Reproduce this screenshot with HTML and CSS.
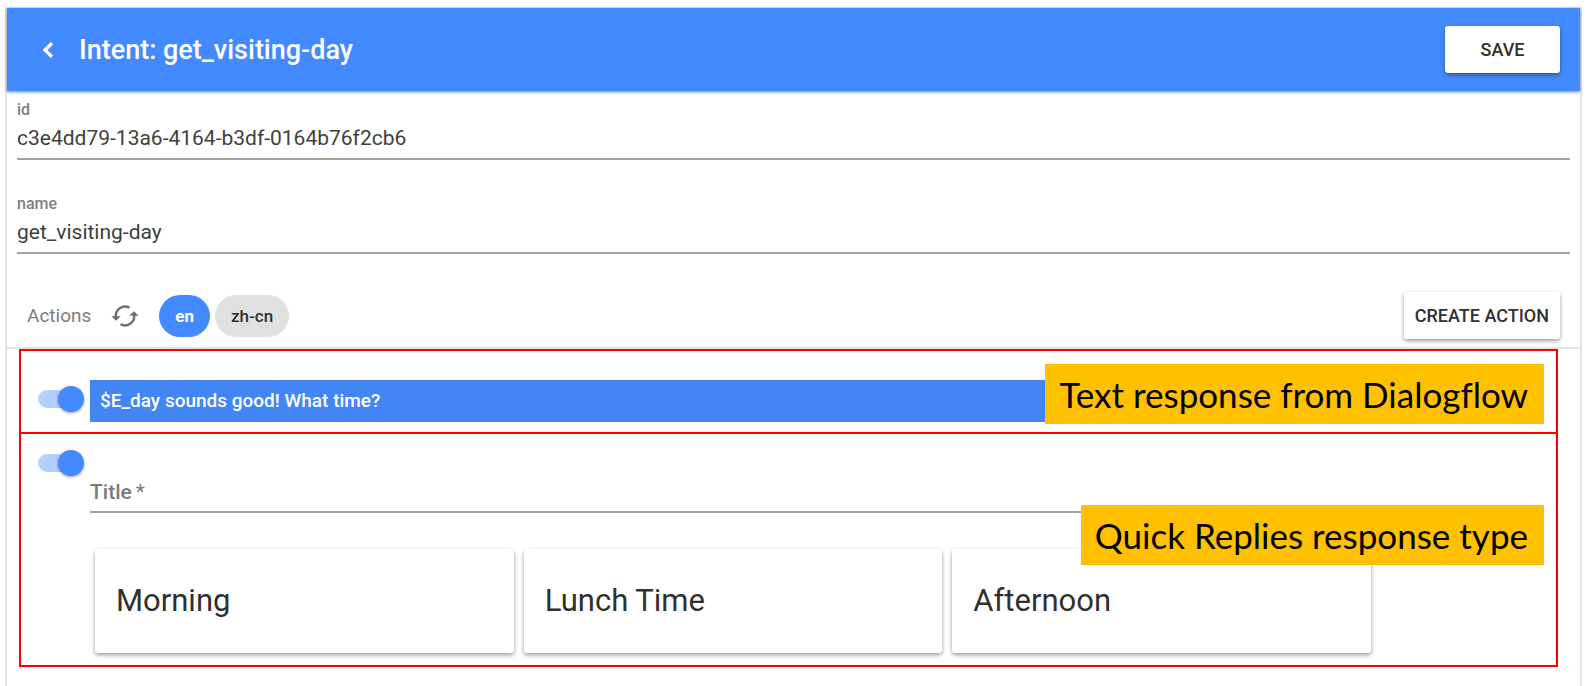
FILE: index.html
```
<!DOCTYPE html>
<html lang="en">
<head>
<meta charset="utf-8">
<meta name="viewport" content="width=device-width, initial-scale=1">
<title>Intent: get_visiting-day</title>
<link rel="stylesheet" href="styles.css">
</head>
<body>
<main class="panel">
  <header class="toolbar">
    <button class="back" type="button" aria-label="Back">
      <svg width="12" height="16" viewBox="0 0 12 16" aria-hidden="true"><path d="M10 1.200L3 8l7 6.800" fill="none" stroke="currentColor" stroke-width="3.300"/></svg>
    </button>
    <h1 class="toolbar-title">Intent: get_visiting-day</h1>
    <button class="button button-save" type="button">SAVE</button>
  </header>

  <form class="fields">
    <div class="field">
      <label class="field-label" for="intent-id">id</label>
      <input class="field-input" id="intent-id" type="text" value="c3e4dd79-13a6-4164-b3df-0164b76f2cb6">
    </div>
    <div class="field">
      <label class="field-label" for="intent-name">name</label>
      <input class="field-input" id="intent-name" type="text" value="get_visiting-day">
    </div>
  </form>

  <section class="actions-bar">
    <h2 class="actions-title">Actions</h2>
    <button class="refresh" type="button" aria-label="Refresh">
      <svg width="28" height="24" viewBox="0 0 28 24" aria-hidden="true">
        <g fill="none" stroke="currentColor" stroke-width="2.400">
          <path d="M4.800 13A9.300 9.300 0 0 1 18.500 3.800"/>
          <path d="M23.200 11A9.300 9.300 0 0 1 9.500 20.200"/>
        </g>
        <path d="M0.300 12.300h9.400l-4.600 4.400z" fill="currentColor"/>
        <path d="M18.300 11.700h9.400l-4.800-4.400z" fill="currentColor"/>
      </svg>
    </button>
    <div class="chips">
      <button class="chip chip-active" type="button">en</button>
      <button class="chip" type="button">zh-cn</button>
    </div>
    <button class="button button-create" type="button">CREATE ACTION</button>
  </section>

  <section class="responses">
    <article class="response response-text">
      <input class="toggle" type="checkbox" checked aria-label="Enable text response">
      <p class="message">$E_day sounds good! What time?</p>
      <span class="note note-text">Text response from Dialogflow</span>
    </article>
    <article class="response response-replies">
      <input class="toggle" type="checkbox" checked aria-label="Enable quick replies">
      <div class="replies">
        <div class="title-field">
          <label class="title-label" for="reply-title">Title<span class="required">*</span></label>
          <input class="title-input" id="reply-title" type="text" required>
        </div>
        <div class="cards">
          <div class="card">Morning</div>
          <div class="card">Lunch Time</div>
          <div class="card">Afternoon</div>
        </div>
      </div>
      <span class="note note-replies">Quick Replies response type</span>
    </article>
  </section>
</main>
</body>
</html>
```
FILE: styles.css
```
* {
  box-sizing: border-box;
}

body {
  margin: 0;
  padding: 7px 9px 0 5px;
  background: #fff;
  color: #303030;
  font-family: Roboto, sans-serif;
}

button,
input {
  font-family: inherit;
}

h1,
h2,
p {
  margin: 0;
}

.panel {
  min-height: calc(100vh - 7px);
  border: 2px solid #e4e4e4;
  border-width: 1px 2px 0;
}

.toolbar {
  display: flex;
  align-items: center;
  padding: 18px 20px;
  background: #448aff;
  color: #fff;
  box-shadow: 0 1px 3px rgba(0, 0, 0, 0.5);
}

.back {
  display: flex;
  padding: 0;
  margin: 0 25px 0 15px;
  border: 0;
  background: none;
  color: inherit;
}

.toolbar-title {
  flex: 1;
  font-size: 27px;
  font-weight: 500;
  line-height: 32px;
}

.button {
  height: 47px;
  padding: 0 11px;
  border: 0;
  border-radius: 3px;
  background: #fff;
  color: #303030;
  font-size: 18px;
  font-weight: 500;
  box-shadow: 0 2px 4px rgba(0, 0, 0, 0.4);
}

.button-save {
  width: 115px;
}

.fields {
  padding: 9px 10px 0;
}

.field {
  display: flex;
  flex-direction: column;
  margin-bottom: 34px;
}

.field-label {
  color: #808080;
  font-size: 16px;
  font-weight: 500;
  line-height: 20px;
}

.field-input {
  width: 100%;
  height: 40px;
  padding: 0 0 2px;
  border: 0;
  border-bottom: 2px solid #a3a3a3;
  background: none;
  color: #404040;
  font-size: 21px;
}

.actions-bar {
  display: flex;
  align-items: center;
  height: 61px;
  padding: 0 20px 4px;
  border-bottom: 2px solid #e4e4e4;
}

.actions-title {
  color: #7d7d7d;
  font-size: 19px;
  font-weight: 400;
}

.refresh {
  display: flex;
  margin: 0 20px;
  padding: 0;
  border: 0;
  background: none;
  color: #6e6e6e;
}

.chips {
  display: flex;
  flex: 1;
  gap: 5px;
}

.chip {
  height: 42px;
  padding: 0 16px;
  border: 0;
  border-radius: 21px;
  background: #e0e0e0;
  color: #303030;
  font-size: 17px;
  font-weight: 500;
}

.chip-active {
  background: #448aff;
  color: #fff;
  font-weight: 700;
}

.responses {
  margin: 0 22px 19px 12px;
  border: 2px solid #f00;
}

.response {
  position: relative;
  display: flex;
  align-items: flex-start;
  padding: 0 12px 0 17px;
}

.response-text {
  padding-top: 29px;
  padding-bottom: 10px;
}

.response-text .toggle {
  margin-top: 6px;
}

.response-replies {
  padding-top: 16px;
  padding-bottom: 12px;
  border-top: 2px solid #f00;
}

.toggle {
  display: grid;
  flex: none;
  align-items: center;
  width: 46px;
  height: 26px;
  margin: 0 6px 0 0;
  appearance: none;
}

.toggle::before,
.toggle::after {
  content: "";
  grid-area: 1 / 1;
}

.toggle::before {
  width: 40px;
  height: 18px;
  border-radius: 9px;
  background: #b4d0ff;
}

.toggle::after {
  justify-self: end;
  width: 26px;
  height: 26px;
  border-radius: 50%;
  background: #448aff;
  box-shadow: 0 1px 3px rgba(0, 0, 0, 0.4);
}

.message {
  flex: 1;
  padding: 0 10px;
  background: #4285f4;
  color: #fff;
  font-size: 19px;
  font-weight: 500;
  line-height: 42px;
}

.replies {
  flex: 1;
  padding-top: 27px;
}

.title-field {
  display: flex;
  align-items: center;
  height: 36px;
  padding-bottom: 4px;
  border-bottom: 2px solid #a3a3a3;
}

.title-label {
  color: #7a7a7a;
  font-size: 21px;
  font-weight: 500;
}

.required {
  margin-left: 4px;
  font-weight: 400;
}

.title-input {
  flex: 1;
  min-width: 0;
  border: 0;
  background: none;
  font-size: 21px;
}

.cards {
  display: flex;
  gap: 10px;
  padding: 36px 173px 0 5px;
}

.card {
  flex: 1;
  padding: 0 21px;
  border-radius: 3px;
  background: #fff;
  font-size: 31px;
  line-height: 104px;
  box-shadow: 0 2px 4px rgba(0, 0, 0, 0.4);
}

.note {
  position: absolute;
  right: 12px;
  padding: 0 16px 0 14px;
  background: #ffc000;
  color: #000;
  font-family: Lato, "Open Sans", sans-serif;
  font-size: 35px;
  font-variant-ligatures: none;
  line-height: 60px;
  white-space: nowrap;
}

.note-text {
  top: 13px;
}

.note-replies {
  top: 71px;
}
```
